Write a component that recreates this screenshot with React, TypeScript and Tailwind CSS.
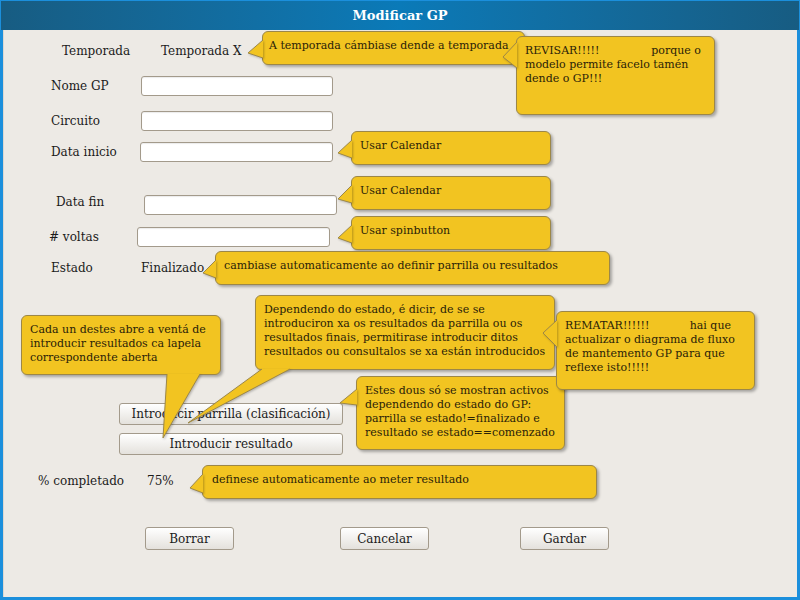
import React from 'react'

type Pt = [number, number]

interface CalloutProps {
  box: [number, number, number, number]
  tail: Pt[]
  lines: React.ReactNode[]
  pl?: string
}

const callouts: CalloutProps[] = [
  {
    box: [262, 31, 263, 34],
    tail: [[263, 40], [248, 53], [263, 58]],
    lines: ['A temporada cámbiase dende a temporada'],
    pl: 'pl-[6px]',
  },
  {
    box: [516, 36, 199, 79],
    tail: [[517, 42], [503, 57], [517, 68]],
    lines: [
      <span key="r" className="flex w-[176px] justify-between"><span>REVISAR!!!!!</span><span>porque o</span></span>,
      'modelo permite facelo tamén',
      'dende o GP!!!',
    ],
  },
  {
    box: [351, 131, 200, 34],
    tail: [[352, 140], [338, 153], [352, 158]],
    lines: ['Usar Calendar'],
  },
  {
    box: [351, 176, 200, 34],
    tail: [[352, 185], [338, 199], [352, 203]],
    lines: ['Usar Calendar'],
  },
  {
    box: [351, 216, 200, 34],
    tail: [[352, 225], [338, 238], [352, 243]],
    lines: ['Usar spinbutton'],
  },
  {
    box: [215, 251, 395, 34],
    tail: [[216, 260], [203, 273], [216, 278]],
    lines: ['cambiase automaticamente ao definir parrilla ou resultados'],
  },
  {
    box: [21, 315, 200, 60],
    tail: [[167, 374], [163, 438], [200, 374]],
    lines: ['Cada un destes abre a ventá de', 'introducir resultados ca lapela', 'correspondente aberta'],
  },
  {
    box: [255, 295, 300, 75],
    tail: [[262, 369], [188, 423], [290, 369]],
    lines: [
      'Dependendo do estado, é dicir, de se se',
      'introduciron xa os resultados da parrilla ou os',
      'resultados finais, permitirase introducir ditos',
      'resultados ou consultalos se xa están introducidos',
    ],
  },
  {
    box: [356, 376, 209, 74],
    tail: [[357, 389], [340, 403], [357, 405]],
    lines: ['Estes dous só se mostran activos', 'dependendo do estado do GP:', 'parrilla se estado!=finalizado e', 'resultado se estado==comenzado'],
  },
  {
    box: [556, 311, 199, 79],
    tail: [[557, 320], [543, 333], [557, 347]],
    lines: [
      <span key="r" className="flex w-[166px] justify-between"><span>REMATAR!!!!!!</span><span>hai que</span></span>,
      'actualizar o diagrama de fluxo',
      'de mantemento GP para que',
      'reflexe isto!!!!!',
    ],
  },
  {
    box: [202, 465, 395, 34],
    tail: [[203, 474], [190, 488], [203, 493]],
    lines: ['definese automaticamente ao meter resultado'],
    pl: 'pl-[9px]',
  },
]

function Callout({ box, tail, lines, pl }: CalloutProps) {
  const [x, y, w, h] = box
  const pts = tail.map(p => p.join(',')).join(' ')
  return (
    <>
      <div
        className={`absolute rounded-[6px] border border-[#9c8748] bg-[#f2c421] pr-2 pt-[7px] text-[11px] leading-[14px] whitespace-nowrap text-[#2a2208] shadow-[2px_2px_3px_rgba(0,0,0,0.3)] ${pl ?? 'pl-2'}`}
        style={{ left: x, top: y, width: w, height: h }}
      >
        {lines.map((l, i) => (
          <div key={i}>{l}</div>
        ))}
      </div>
      <svg className="pointer-events-none absolute left-0 top-0 drop-shadow-[1px_1px_1px_rgba(0,0,0,0.25)]" width={800} height={600}>
        <polygon points={pts} fill="#f2c421" />
        <polyline points={pts} fill="none" stroke="#9c8748" strokeWidth={1} />
      </svg>
    </>
  )
}

const input = 'h-[20px] rounded-[3px] border border-[#a39a8b] bg-white shadow-[inset_0_1px_1px_rgba(0,0,0,0.08)]'
const btn = 'flex items-center justify-center rounded-[3px] border border-[#a39a8b] bg-gradient-to-b from-white to-[#e4e1dc] text-[12px] text-[#1b1b1b]'

export default function App() {
  return (
    <div className="relative h-[600px] w-[800px] overflow-hidden text-[12px] text-[#1b1b1b]" style={{ fontFamily: '"DejaVu Serif", serif' }}>
      <div className="flex h-full flex-col bg-[#1b8fdc] px-px pb-[3px] pt-px">
        <div className="flex h-[29px] items-center justify-center bg-gradient-to-r from-[#175c82] via-[#0a7ab8] to-[#175c82] text-[13px] font-bold text-white">
          Modificar GP
        </div>
        <div className="mx-[2px] flex flex-1 flex-col border-l border-[#dcd8d0] bg-[#edeae5] pt-[11px]">
          <div className="flex h-[20px] items-center pl-[58px]">
            <span className="w-[99px]">Temporada</span>
            <span>Temporada X</span>
          </div>
          <div className="mt-[15px] flex items-center pl-[47px]">
            <span className="w-[90px]">Nome GP</span>
            <div className={`${input} w-[192px]`} />
          </div>
          <div className="mt-[15px] flex items-center pl-[47px]">
            <span className="w-[90px]">Circuito</span>
            <div className={`${input} w-[192px]`} />
          </div>
          <div className="mt-[11px] flex items-center pl-[47px]">
            <span className="w-[89px]">Data inicio</span>
            <div className={`${input} w-[193px]`} />
          </div>
          <div className="mt-[33px] flex items-start pl-[52px]">
            <span className="w-[88px] leading-[14px]">Data fin</span>
            <div className={`${input} w-[193px]`} />
          </div>
          <div className="mt-[12px] flex items-center pl-[45px]">
            <span className="w-[88px]">
              # voltas
            </span>
            <div className={`${input} w-[193px]`} />
          </div>
          <div className="mt-[11px] flex h-[20px] items-center pl-[47px]">
            <span className="w-[90px]">Estado</span>
            <span>Finalizado</span>
          </div>
          <div className="mt-[125px] flex flex-col gap-[8px] pl-[115px]">
            <button className={`${btn} h-[22px] w-[224px]`}>Introducir parrilla (clasificación)</button>
            <button className={`${btn} h-[22px] w-[224px]`}>Introducir resultado</button>
          </div>
          <div className="mt-[16px] flex h-[20px] items-center pl-[34px]">
            <span className="w-[109px]">% completado</span>
            <span>75%</span>
          </div>
          <div className="mt-[36px] flex pl-[141px]">
            <button className={`${btn} h-[23px] w-[89px]`}>Borrar</button>
            <button className={`${btn} ml-[106px] h-[23px] w-[89px]`}>Cancelar</button>
            <button className={`${btn} ml-[91px] h-[23px] w-[89px]`}>Gardar</button>
          </div>
        </div>
      </div>
      {callouts.map((c, i) => (
        <Callout key={i} {...c} />
      ))}
    </div>
  )
}
